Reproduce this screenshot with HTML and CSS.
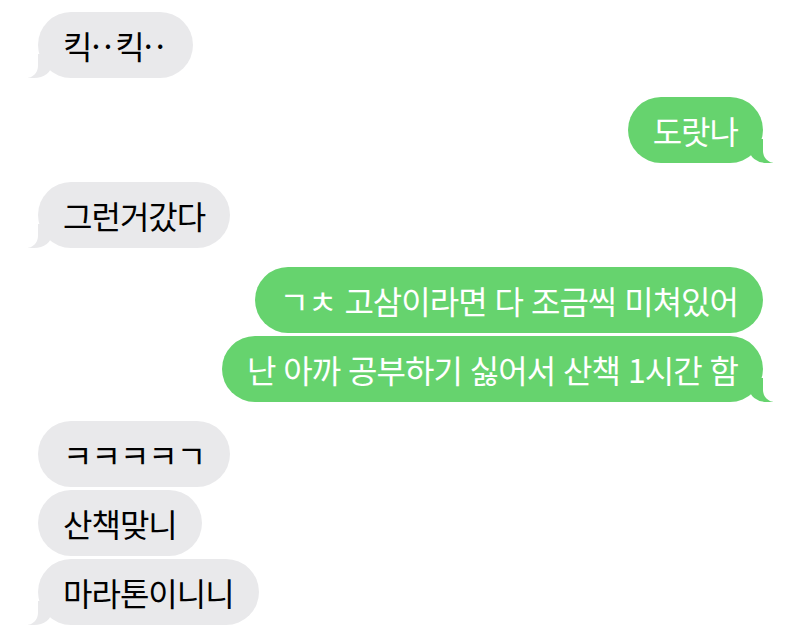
FILE: index.html
```html
<!DOCTYPE html>
<html lang="ko">
<head>
    <meta charset="UTF-8">
    <meta name="viewport" content="width=device-width, initial-scale=1.0">
    <title>메시지</title>
    <link rel="stylesheet" href="styles.css">
</head>
<body>

    <div class="thread">
        <div class="group">
            <div class="msg them tail">킥<span class="dots">··</span>킥<span class="dots">··</span></div>
        </div>

        <div class="group">
            <div class="msg me tail">도랏나</div>
        </div>

        <div class="group">
            <div class="msg them tail">그런거갔다</div>
        </div>

        <div class="group">
            <div class="msg me">ㄱㅊ 고삼이라면 다 조금씩 미쳐있어</div>
            <div class="msg me tail">난 아까 공부하기 싫어서 산책 1시간 함</div>
        </div>

        <div class="group">
            <div class="msg them">ㅋㅋㅋㅋㄱ</div>
            <div class="msg them">산책맞니</div>
            <div class="msg them tail">마라톤이니니</div>
        </div>
    </div>

</body>
</html>
```

FILE: styles.css
```css
body {
    margin: 0;
    background-color: #ffffff;
    font-family: "Noto Sans CJK KR", "Noto Sans", sans-serif;
}
.thread {
    display: flex;
    flex-direction: column;
    gap: 19px;
    padding: 12px 37px 0 38px;
}
.group {
    display: flex;
    flex-direction: column;
    gap: 3px;
}
.msg {
    position: relative;
    height: 66px;
    line-height: 66px;
    padding: 0 25px;
    border-radius: 33px;
    font-size: 32px;
    letter-spacing: -1px;
    white-space: nowrap;
}
.dots {
    letter-spacing: 3px;
}
.them {
    align-self: flex-start;
    background-color: #e9e9eb;
    color: #000000;
}
.me {
    align-self: flex-end;
    background-color: #66d36e;
    color: #ffffff;
}

/* bubble tails */
.tail::before,
.tail::after {
    content: "";
    position: absolute;
    bottom: 0;
    height: 24px;
}
.them.tail::before {
    left: -10px;
    width: 24px;
    background-color: #e9e9eb;
    border-bottom-right-radius: 18px 14px;
}
.them.tail::after {
    left: -26px;
    width: 26px;
    background-color: #ffffff;
    border-bottom-right-radius: 12px;
}
.me.tail::before {
    right: -10px;
    width: 24px;
    background-color: #66d36e;
    border-bottom-left-radius: 18px 14px;
}
.me.tail::after {
    right: -26px;
    width: 26px;
    background-color: #ffffff;
    border-bottom-left-radius: 12px;
}
```
